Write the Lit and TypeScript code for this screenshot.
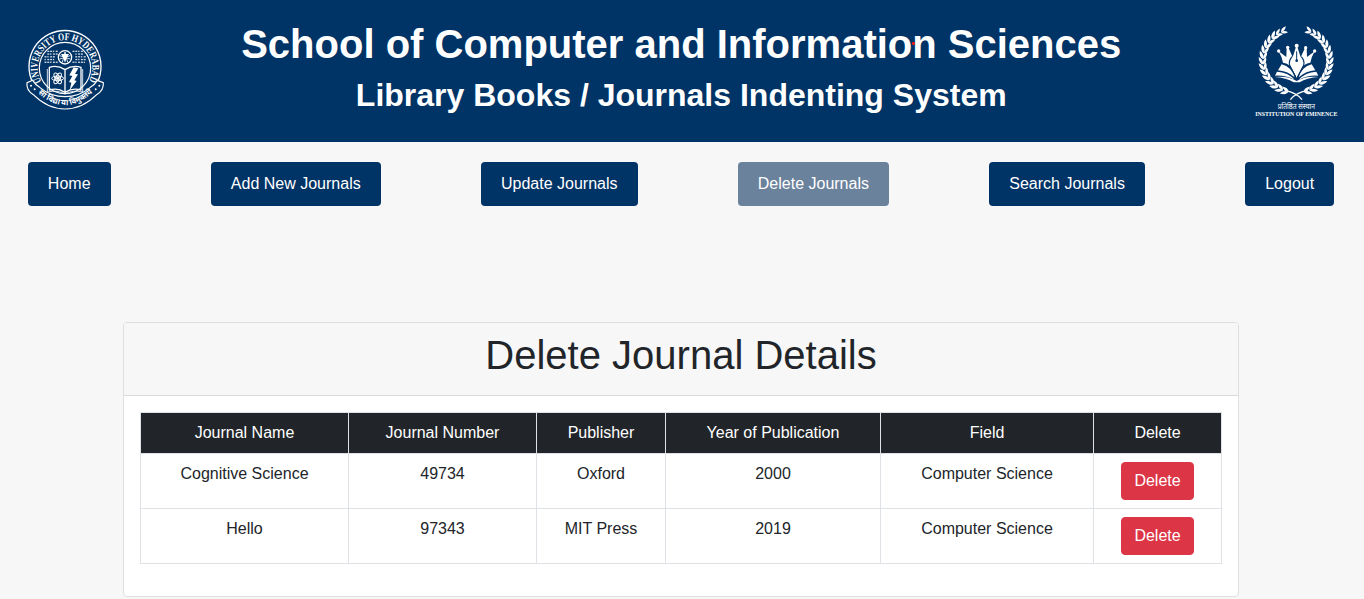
import { LitElement, html, svg, css } from "lit";
import { customElement, property } from "lit/decorators.js";

@customElement("university-seal")
export class UniversitySeal extends LitElement {
  static styles = css`
    :host { display: block; width: 90px; height: 90px; }
    svg { display: block; width: 100%; height: 100%; }
    .ring { fill: none; stroke: #fff; }
    .name { font: bold 31px "Liberation Serif", serif; fill: #fff; }
    .motto { font: bold 24px "Noto Sans Devanagari", "Noto Sans", sans-serif; fill: #fff; }
  `;
  render() {
    const dots: unknown[] = [];
    for (let row = 0; row < 5; row++) {
      for (let col = 0; col < 15; col++) {
        const x = 76 + col * 8.4;
        const y = 77 + row * 8.2;
        if (Math.hypot(x - 135, y - 97) < 28 || Math.hypot(x - 135, y - 126) > 71) continue;
        dots.push(svg`<rect x=${x - 2.5} y=${y} width=${(row + col) % 3 ? 6 : 4} height="4" fill="#fff" opacity=".8"/>`);
      }
    }
    return html`<svg viewBox="0 0 270 270" role="img" aria-label="University of Hyderabad">
      <defs>
        <path id="arc" d="M65 170 A82 82 0 1 1 205 170" />
        <path id="base" d="M48 199 Q135 282 222 199" />
      </defs>
      <path class="ring" stroke-width="4" d="M38 172 A108 108 0 1 1 232 172" />
      <circle class="ring" stroke-width="3.5" cx="135" cy="129" r="77" />
      <text class="name"><textPath href="#arc" textLength="344" lengthAdjust="spacingAndGlyphs">UNIVERSITY OF HYDERABAD</textPath></text>
      ${dots}
      <circle class="ring" stroke-width="4" cx="135" cy="97" r="20" />
      <path d="M123 87h24l-6 10-6 16-6-16z" fill="#fff" />
      <path class="ring" stroke-width="2.5" d="M119 92l32 10M151 92l-32 10M127 112l8-31 8 31" />
      <path class="ring" stroke-width="4" stroke-linejoin="round"
        d="M135 134 Q112 119 88 127 V195 Q113 187 135 202 Q158 187 183 195 V127 Q158 119 135 134 V202" />
      <path class="ring" stroke-width="2.5" d="M82 132V201Q113 194 135 207Q157 194 188 201V132" />
      <g class="ring" stroke-width="3" transform="translate(113 160)">
        <ellipse rx="18" ry="7" /><ellipse rx="18" ry="7" transform="rotate(60)" /><ellipse rx="18" ry="7" transform="rotate(120)" />
        <circle r="4" fill="#fff" />
      </g>
      <path d="M161 127 L175 130 L165 147 L174 148 L163 166 L170 168 L149 196 L154 173 L147 171 L157 153 L148 151z" fill="#fff" />
      <path d="M38 166 L21 173 Q18 196 40 209 Q83 252 135 252 Q187 252 230 209 Q252 196 250 173 L232 166 Q225 178 211 187 Q178 215 135 215 Q92 215 59 187 Q45 178 38 166z"
        fill="#003366" stroke="#fff" stroke-width="3.5" />
      <g fill="#fff"><circle cx="33" cy="182" r="3" /><circle cx="44" cy="193" r="3" /><circle cx="238" cy="182" r="3" /><circle cx="227" cy="193" r="3" /></g>
      <text class="motto"><textPath href="#base" startOffset="8" textLength="184" lengthAdjust="spacingAndGlyphs">सा विद्या या विमुक्तये</textPath></text>
    </svg>`;
  }
}

@customElement("eminence-emblem")
export class EminenceEmblem extends LitElement {
  static styles = css`
    :host { display: block; width: 92px; height: 102px; }
    svg { display: block; width: 100%; height: 100%; }
    .hindi { font: 22px "Noto Sans Devanagari", "Noto Sans", sans-serif; fill: #fff; }
    .english { font: bold 15.5px "Liberation Serif", serif; fill: #fff; }
  `;
  private branch() {
    const leaf = "M0 0 C5 -8 14 -10 26 -6 C18 2 9 4 0 0z";
    const leaves: unknown[] = [];
    for (let i = 0; i < 15; i++) {
      const deg = 103 + i * 10;
      const a = (deg * Math.PI) / 180;
      const x = 138 + 99 * Math.cos(a);
      const y = 122 + 96 * Math.sin(a);
      const size = i > 12 ? 0.85 : 1;
      leaves.push(svg`<path d=${leaf} transform="translate(${x} ${y}) rotate(${deg + 79}) scale(${size})"/>
        <path d=${leaf} transform="translate(${x} ${y}) rotate(${deg + 104}) scale(${size * 0.92} ${-size * 0.92})"/>`);
    }
    return svg`<g fill="#fff">${leaves}</g>
      <path d="M156 239 Q141 218 104 211" fill="none" stroke="#fff" stroke-width="4"/>`;
  }
  render() {
    return html`<svg viewBox="0 0 276 306" role="img" aria-label="Institution of Eminence">
      ${this.branch()}
      <g transform="translate(277 0) scale(-1 1)">${this.branch()}</g>
      <g fill="#fff">
        <path d="M138 80 H142 L152 112 L165 84 L170 84 L171 111 L194 94 Q184 111 181 128 Q160 130 152 150 L140 173 L128 150 Q120 130 99 128 Q96 111 86 94 L109 111 L110 82 L115 82 L128 112z" />
        <circle cx="140" cy="77" r="6" /><circle cx="113" cy="82" r="5" /><circle cx="167" cy="83" r="5" /><circle cx="86" cy="93" r="5" /><circle cx="194" cy="93" r="5" />
        <path d="M95 133 Q125 141 134 172 Q112 153 84 151z" /><path d="M185 133 Q155 141 146 172 Q168 153 196 151z" />
        <path d="M81 155 Q114 157 134 179 Q104 165 75 167z" /><path d="M199 155 Q166 157 146 179 Q176 165 205 167z" />
        <path d="M73 171 Q114 167 140 183 Q166 167 207 171 Q170 173 149 187 H131 Q110 173 73 171z" />
      </g>
      <path d="M140 94 V120" stroke="#003366" stroke-width="3" />
      <circle cx="140" cy="122" r="4" fill="#003366" />
      <path d="M126 110Q115 124 119 136L137 171M154 110Q165 124 161 136L143 171" stroke="#003366" fill="none" stroke-width="3.5" />
      <text class="hindi" x="83" y="268" textLength="112" lengthAdjust="spacingAndGlyphs">प्रतिष्ठित संस्थान</text>
      <text class="english" x="16" y="289" textLength="246" lengthAdjust="spacingAndGlyphs">INSTITUTION OF EMINENCE</text>
    </svg>`;
  }
}

@customElement("nav-button")
export class NavButton extends LitElement {
  @property({ type: Boolean, reflect: true }) active = false;
  static styles = css`
    :host { display: block; }
    .button {
      display: block; padding: 10px 20px; border: 0; border-radius: 4px;
      background: #003366; color: #fff; white-space: nowrap;
      font: 16px/24px "Liberation Sans", Arial, sans-serif; cursor: pointer;
    }
    :host([active]) .button { background: #6b829c; }
  `;
  render() {
    return html`<button class="button"><slot></slot></button>`;
  }
}

@customElement("app-root")
export class AppRoot extends LitElement {
  static styles = css`
    :host {
      display: block; box-sizing: border-box; height: 599px; overflow: hidden;
      background: #f7f7f7; color: #212529;
      font: 16px/24px "Liberation Sans", Arial, sans-serif;
    }
    .header {
      display: flex; justify-content: space-between; align-items: flex-start;
      box-sizing: border-box; height: 142px; padding: 20px 22px 0 20px;
      background: #003366; color: #fff;
    }
    .seal { margin-top: 5px; }
    .titles { padding-left: 2.5px; text-align: center; white-space: nowrap; }
    h1, h2 { margin: 0 0 8px; line-height: 1.2; }
    .school { position: relative; font-size: 40px; }
    .system { font-size: 32px; }
    .dot { position: absolute; left: 671px; top: 22px; width: 3px; height: 3px; border-radius: 1px; background: #f01c1c; }
    .nav { display: flex; justify-content: center; gap: 100.3px; padding: 20px 2px 0 0; }
    .card {
      box-sizing: border-box; width: 1116px; margin: 116px 0 0 123px;
      border: 1px solid #dfdfdf; border-radius: 4px; background: #fff; overflow: hidden;
    }
    .card-header { padding: 8px 16px; background: #f7f7f7; border-bottom: 1px solid #d9dadb; }
    .card-title { font-size: 40px; font-weight: 400; text-align: center; }
    .card-body { padding: 16px; }
    table { width: 1082px; margin: 0 0 16px; table-layout: fixed; border-collapse: collapse; text-align: center; }
    th, td { box-sizing: border-box; padding: 8px; border: 1px solid #dee2e6; vertical-align: top; font-weight: 400; }
    th { background: #212529; color: #fff; }
    .name { width: 208px; } .number { width: 188px; } .publisher { width: 129px; }
    .year { width: 215px; } .field { width: 213px; } .action { width: 128px; }
    .delete {
      display: block; margin: 0 auto; padding: 6px 12px; border: 1px solid #dc3545; border-radius: 4px;
      background: #dc3545; color: #fff; font: inherit; cursor: pointer;
    }
  `;

  private links = ["Home", "Add New Journals", "Update Journals", "Delete Journals", "Search Journals", "Logout"];
  private journals = [
    ["Cognitive Science", "49734", "Oxford", "2000", "Computer Science"],
    ["Hello", "97343", "MIT Press", "2019", "Computer Science"],
  ];

  render() {
    return html`
      <header class="header">
        <university-seal class="seal"></university-seal>
        <div class="titles">
          <h1 class="school">School of Computer and Information Sciences<span class="dot"></span></h1>
          <h2 class="system">Library Books / Journals Indenting System</h2>
        </div>
        <eminence-emblem></eminence-emblem>
      </header>
      <nav class="nav">
        ${this.links.map((l) => html`<nav-button ?active=${l === "Delete Journals"}>${l}</nav-button>`)}
      </nav>
      <section class="card">
        <div class="card-header"><h1 class="card-title">Delete Journal Details</h1></div>
        <div class="card-body">
          <table>
            <thead><tr>
              <th class="name">Journal Name</th><th class="number">Journal Number</th><th class="publisher">Publisher</th>
              <th class="year">Year of Publication</th><th class="field">Field</th><th class="action">Delete</th>
            </tr></thead>
            <tbody>
              ${this.journals.map((row) => html`<tr>${row.map((c) => html`<td>${c}</td>`)}<td><button class="delete">Delete</button></td></tr>`)}
            </tbody>
          </table>
        </div>
      </section>`;
  }
}
